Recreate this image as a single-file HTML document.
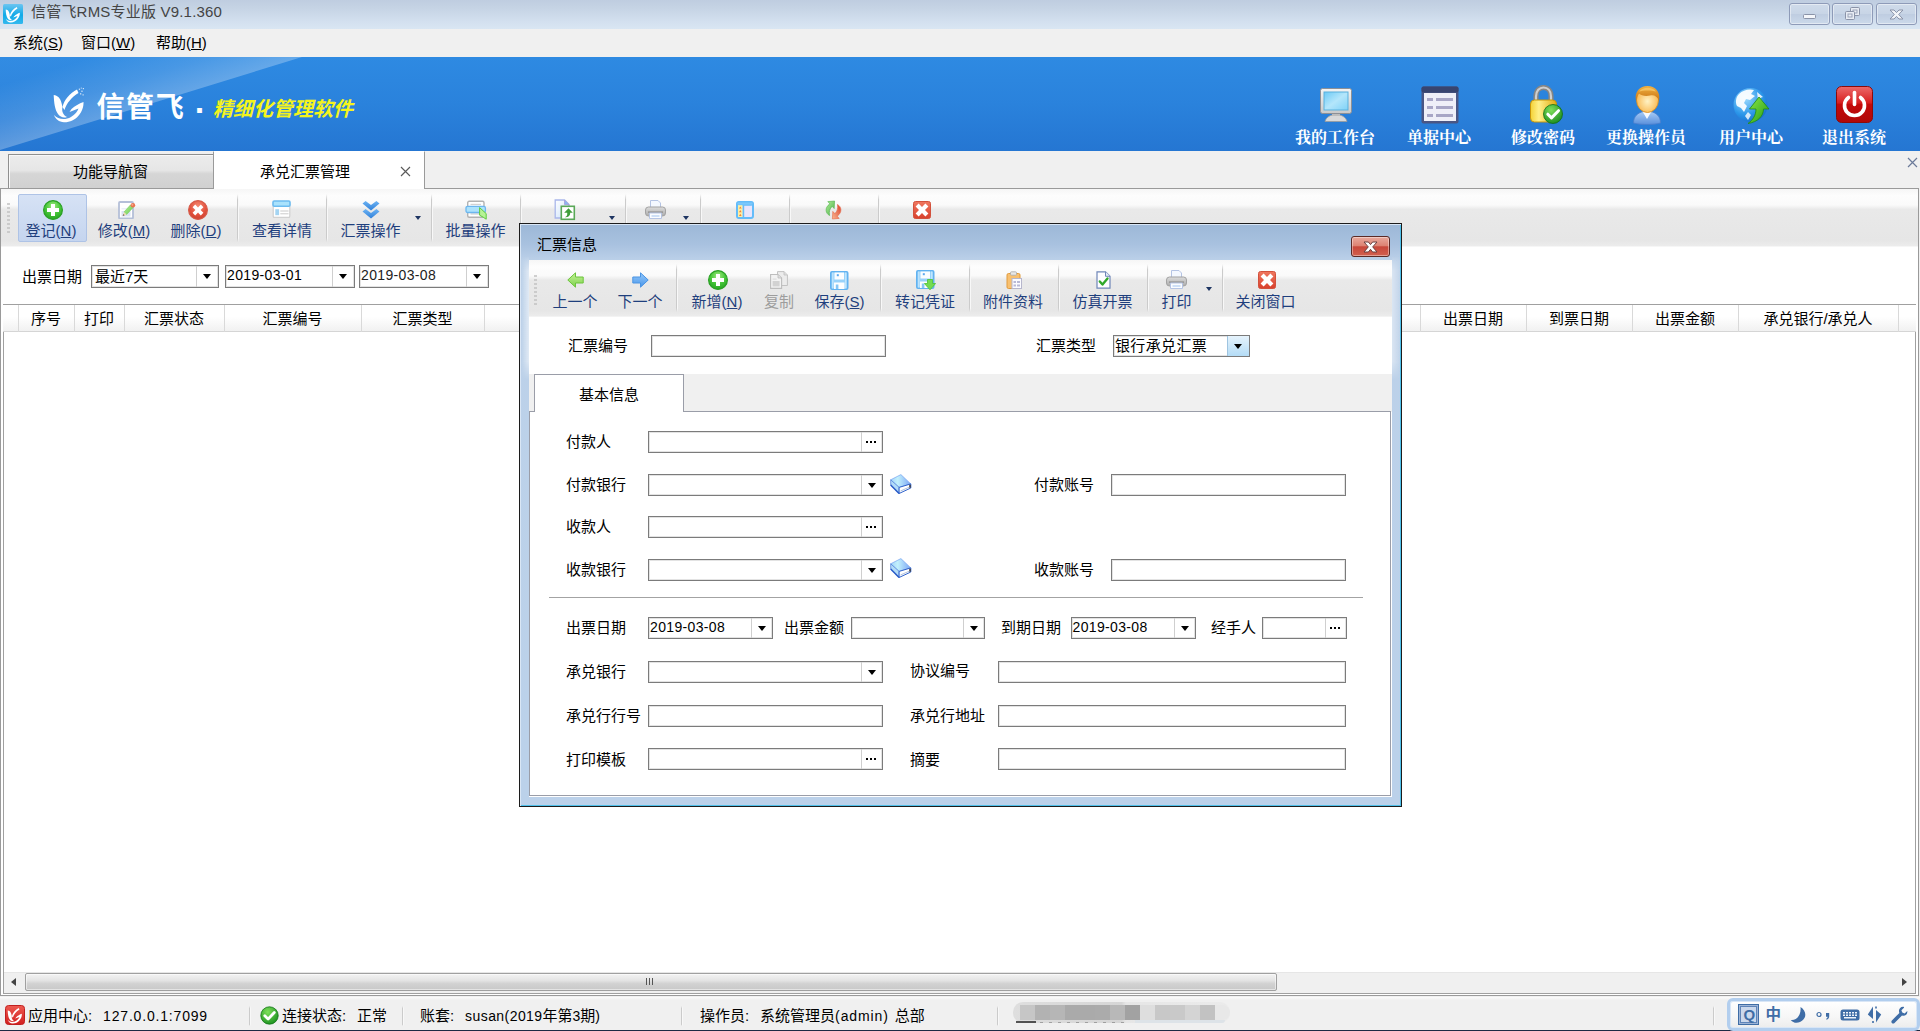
<!DOCTYPE html>
<html lang="zh-CN">
<head>
<meta charset="utf-8">
<title>信管飞RMS专业版 V9.1.360</title>
<style>
*{box-sizing:border-box;margin:0;padding:0}
html,body{width:1920px;height:1031px;overflow:hidden;background:#f0f0f0}
body{position:relative;font-family:"Liberation Sans","Noto Sans CJK SC",sans-serif;font-size:15px;color:#000}
.a{position:absolute}
.t{position:absolute;white-space:nowrap;line-height:20px;height:20px}
.c{text-align:center}
/* title bar */
#titlebar{left:0;top:0;width:1920px;height:29px;background:linear-gradient(#bfcde0 0,#c6d4e5 30%,#d3e0ef 75%,#d9e6f3 100%)}
.wb{position:absolute;top:3px;height:22px;border:1px solid #8e9bb8;border-radius:3px;background:linear-gradient(#cfdbea 0,#c8d5e6 48%,#bfcde1 52%,#cbd9ea 100%);box-shadow:inset 0 0 0 1px rgba(255,255,255,.45)}
/* menu */
#menubar{left:0;top:29px;width:1920px;height:28px;background:#f0f0f0}
/* banner */
#banner{left:0;top:57px;width:1920px;height:94px;background:linear-gradient(#2e8ae2 0,#2a82dc 50%,#2576d2 100%);overflow:hidden}
.bl{top:70px;height:22px;line-height:22px;font-size:16px;font-weight:700;color:#fff;font-family:"Liberation Serif","Noto Serif CJK SC",serif}
/* tabs */
.tab{position:absolute;font-size:15px;text-align:center}
/* toolbar */
.tb{background:linear-gradient(#f6f6f6 0,#fdfdfd 12%,#fafafa 28%,#e9e9e9 36%,#e6e6e6 90%,#ececec 100%)}
.tl{position:absolute;white-space:nowrap;line-height:20px;height:20px;color:#1f3f7d;font-size:15px;text-align:center;width:100px;margin-left:-50px}
.sep{position:absolute;width:2px;background:linear-gradient(90deg,#cbcbcb 0,#cbcbcb 50%,#f8f8f8 50%,#f8f8f8 100%);-webkit-mask-image:linear-gradient(transparent 0,#000 12%,#000 92%,transparent 100%);mask-image:linear-gradient(transparent 0,#000 12%,#000 92%,transparent 100%)}
.ic{position:absolute}
/* inputs */
.in{position:absolute;background:#fff;border:1px solid #7b7b7b;box-shadow:inset 0 0 0 1px #e3e3e3}
.in .b{position:absolute;right:0;top:0;bottom:0;width:21px;border-left:1px solid #cfcfcf}
.in .b.dd:after{content:"";position:absolute;left:6px;top:8px;border:4px solid transparent;border-top:5px solid #000;border-bottom:0}
.in .b.el:after{content:"";position:absolute;left:4px;top:9px;width:2px;height:2px;background:#000;box-shadow:4px 0 0 #000,8px 0 0 #000}
.in .v{position:absolute;left:1px;top:0;line-height:19px;font-size:14px;letter-spacing:.35px;white-space:nowrap}
.lb{position:absolute;white-space:nowrap;line-height:20px;height:20px;font-size:15px}
.hd{position:absolute;top:305px;height:27px;line-height:27px;text-align:center;font-size:15px;border-right:1px solid #d9d9d9}
</style>
</head>
<body>
<!-- TITLE BAR -->
<div id="titlebar" class="a">
<svg class="a" style="left:3px;top:4px" width="20" height="20" viewBox="0 0 20 20"><defs><linearGradient id="tig" x1="0" y1="0" x2="0" y2="1"><stop offset="0" stop-color="#6cc5f1"/><stop offset=".55" stop-color="#10aae8"/><stop offset="1" stop-color="#34b9ee"/></linearGradient></defs><rect x="0" y="0" width="20" height="20" rx="1.5" fill="url(#tig)"/><g fill="#fff" transform="translate(-22.800,-39.600) scale(.475)"><path d="M53.700 95C57.500 95.500 60.500 98 61.500 103L62.500 107C61.500 111 63 115 67 117 64 118.500 60 117 58 114 55 110 54 103 53.700 95z"/><path d="M62.500 107C64 100 70 93 77 89.500L78.500 93C72 97 66.500 103 64.500 110z"/><path d="M83.500 102C84 112 76 122.500 64 122.300 59 122 55.500 119 54 115 58 119.500 65 120.500 71 117 75 114.500 77.500 111.500 78.500 108.500L69.500 112 71.500 109C75 106 79 103.500 83.500 102z"/></g></svg>
<div class="t" style="left:31px;top:2px;font-size:15px;color:#444;letter-spacing:.2px">信管飞RMS专业版 V9.1.360</div>
<div class="wb" style="left:1789px;width:41px"><div class="a" style="left:13px;top:10px;width:13px;height:5px;border:1px solid #8a93a8;border-radius:1.5px;background:#f4f6fa"></div></div>
<div class="wb" style="left:1832px;width:41px"><div class="a" style="left:17px;top:3px;width:10px;height:9px;border:1px solid #8a93a8;border-radius:1.5px;background:#e9edf4;box-shadow:inset 0 0 0 1.5px #e9edf4,inset 0 0 0 2.5px #9aa3b8"></div><div class="a" style="left:12px;top:7px;width:10px;height:9px;border:1px solid #8a93a8;border-radius:1.5px;background:#e9edf4;box-shadow:inset 0 0 0 1.5px #e9edf4,inset 0 0 0 2.5px #9aa3b8"></div></div>
<div class="wb" style="left:1876px;width:41px"><svg class="a" style="left:12px;top:5px" width="15" height="11" viewBox="0 0 15 11"><path d="M1 1h4l2.500 2.600 2.500 -2.600h4l-4.300 4.500 4.300 4.500h-4l-2.500 -2.600 -2.500 2.600h-4l4.300 -4.500z" fill="#f2f4f8" stroke="#8a93a8" stroke-width="1" stroke-linejoin="round"/></svg></div>
</div>
<!-- MENU -->
<div id="menubar" class="a">
<div class="t" style="left:13px;top:4px">系统(<u>S</u>)</div>
<div class="t" style="left:81px;top:4px">窗口(<u>W</u>)</div>
<div class="t" style="left:156px;top:4px">帮助(<u>H</u>)</div>
</div>
<!-- BANNER -->
<div id="banner" class="a">
<svg class="a" style="left:0;top:0" width="420" height="94" viewBox="0 0 420 94"><defs><linearGradient id="bg1" gradientUnits="userSpaceOnUse" x1="151" y1="46.500" x2="133" y2="-12"><stop offset="0" stop-color="#fff" stop-opacity=".27"/><stop offset=".45" stop-color="#fff" stop-opacity=".13"/><stop offset="1" stop-color="#fff" stop-opacity=".02"/></linearGradient></defs><polygon points="0,0 302,0 0,93" fill="url(#bg1)"/></svg>
<svg class="a" style="left:50px;top:29px" width="38" height="38" viewBox="50 86 38 38"><g fill="#fff"><path d="M53.700 95C57.500 95.500 60.500 98 61.500 103L62.500 107C61.500 111 63 115 67 117 64 118.500 60 117 58 114 55 110 54 103 53.700 95z"/><path d="M62.500 107C64 100 70 93 77 89.500L78.500 93C72 97 66.500 103 64.500 110z"/><path d="M83.500 102C84 112 76 122.500 64 122.300 59 122 55.500 119 54 115 58 119.500 65 120.500 71 117 75 114.500 77.500 111.500 78.500 108.500L69.500 112 71.500 109C75 106 79 103.500 83.500 102z"/><g opacity=".75"><rect x="78.800" y="88.600" width="1.300" height="1.300"/><rect x="81.300" y="90.600" width="1.300" height="1.300"/><rect x="80" y="93.200" width="1.300" height="1.300"/><rect x="82.800" y="88" width="1.200" height="1.200"/><rect x="82.500" y="94.300" width="1.200" height="1.200"/><rect x="80.800" y="87.600" width="1" height="1"/></g></g></svg>
<div class="t" style="left:96.500px;top:30.500px;height:40px;line-height:40px;font-size:28px;color:#fff;font-weight:700;letter-spacing:1.600px">信管飞</div>
<div class="t" id="middot" style="left:193px;top:33px;width:15px;height:40px;line-height:40px;font-size:34px;font-weight:700;color:#fff;text-align:center">·</div>
<div class="t" style="left:213px;top:37px;height:30px;line-height:30px;font-size:20px;color:#f4f41c;font-weight:700;font-style:italic">精细化管理软件</div>

<!-- monitor -->
<svg class="a" style="left:1319px;top:30px" width="34" height="37" viewBox="0 0 34 37"><defs><linearGradient id="mo1" x1="0" y1="0" x2="0" y2="1"><stop offset="0" stop-color="#f4f4f4"/><stop offset="1" stop-color="#c9c9c9"/></linearGradient><linearGradient id="mo2" x1="0" y1="0" x2="1" y2="1"><stop offset="0" stop-color="#6ccaf6"/><stop offset=".5" stop-color="#b4e6fb"/><stop offset="1" stop-color="#7ed2f8"/></linearGradient></defs><path d="M6 34.500C7 30 12 27.500 17 27.500S27 30 28 34.500z" fill="#d9d9d9" stroke="#9a9a9a" stroke-width=".8"/><rect x="13" y="25" width="8" height="4" fill="#bdbdbd"/><rect x="1.500" y="1.500" width="31" height="25" rx="2" fill="url(#mo1)" stroke="#8d9096" stroke-width="1"/><rect x="5" y="5" width="24" height="18" fill="url(#mo2)" stroke="#5ab0dc" stroke-width="1"/></svg>
<div class="t bl" style="left:1295px">我的工作台</div>
<!-- doc -->
<svg class="a" style="left:1421px;top:29px" width="38" height="38" viewBox="0 0 38 38"><rect x="0.500" y="0.500" width="37" height="37" rx="2" fill="#4a5684"/><rect x="0.500" y="0.500" width="37" height="6" rx="2" fill="#38446f"/><rect x="3" y="7" width="32" height="28" fill="#efeff8"/><g fill="#a8a6c6"><rect x="6" y="12" width="6" height="3"/><rect x="15" y="12" width="17" height="3"/><rect x="6" y="20" width="6" height="3"/><rect x="15" y="20" width="17" height="3"/><rect x="6" y="28" width="6" height="3"/><rect x="15" y="28" width="17" height="3"/></g></svg>
<div class="t bl" style="left:1407px">单据中心</div>
<!-- lock -->
<svg class="a" style="left:1529px;top:28px" width="36" height="40" viewBox="0 0 36 40"><defs><linearGradient id="lk1" x1="0" y1="0" x2="1" y2="0"><stop offset="0" stop-color="#f4d236"/><stop offset=".32" stop-color="#fff08a"/><stop offset="1" stop-color="#e0aa10"/></linearGradient><radialGradient id="lk2" cx=".4" cy=".3" r=".8"><stop offset="0" stop-color="#7fe05a"/><stop offset="1" stop-color="#12841a"/></radialGradient></defs><path d="M7 17V11.500C7 5.500 10.500 2.500 14.500 2.500S22 5.500 22 11.500V17" fill="none" stroke="#858585" stroke-width="5.200"/><path d="M7 17V11.500C7 5.500 10.500 2.500 14.500 2.500S22 5.500 22 11.500V17" fill="none" stroke="#cfcfcf" stroke-width="2.200"/><rect x="1.500" y="15" width="26" height="22" rx="4" fill="url(#lk1)" stroke="#c8960c" stroke-width="1"/><circle cx="24" cy="29" r="9.500" fill="url(#lk2)" stroke="#0f6d14" stroke-width=".8"/><path d="M18.800 29.200l3.700 3.700 7 -7.200" fill="none" stroke="#fff" stroke-width="3" stroke-linecap="round" stroke-linejoin="round"/></svg>
<div class="t bl" style="left:1511px">修改密码</div>
<!-- user -->
<svg class="a" style="left:1631px;top:28px" width="32" height="40" viewBox="0 0 32 40"><defs><radialGradient id="us1" cx=".5" cy=".55" r=".6"><stop offset="0" stop-color="#fff2c4"/><stop offset="1" stop-color="#f8b040"/></radialGradient><linearGradient id="us2" x1="0" y1="0" x2="0" y2="1"><stop offset="0" stop-color="#a8ccf6"/><stop offset="1" stop-color="#5a90dc"/></linearGradient><linearGradient id="us3" x1="0" y1="0" x2="0" y2="1"><stop offset="0" stop-color="#f0b040"/><stop offset="1" stop-color="#c87414"/></linearGradient></defs><path d="M2.500 38C2.500 31 7 28 12 26.500H20C25 28 29.500 31 29.500 38 23 40 9 40 2.500 38z" fill="url(#us2)" stroke="#4a7ecc" stroke-width=".8"/><path d="M11.500 26.500L16 34 20.500 26.500z" fill="#f6faff"/><ellipse cx="16.500" cy="15" rx="11" ry="12.500" fill="url(#us1)" stroke="#d88a18" stroke-width=".8"/><path d="M5 15.500C3 7 9 1 16.500 1S30 7 28 15.500C26.500 11.500 23 9.500 19 10.500 14.500 11.600 10 10.500 8 8.500 6.500 10.500 5.500 13 5 15.500z" fill="url(#us3)"/><path d="M8 6.500C10.500 3.500 14 2.500 17.500 2.800 21 3.100 23.500 4.500 25 6.500 21 5 12 5 8 6.500z" fill="#f8c868" opacity=".8"/></svg>
<div class="t bl" style="left:1606px">更换操作员</div>
<!-- globe -->
<svg class="a" style="left:1732px;top:29px" width="38" height="38" viewBox="0 0 38 38"><defs><radialGradient id="gl1" cx=".35" cy=".3" r=".8"><stop offset="0" stop-color="#9fdcff"/><stop offset=".6" stop-color="#2c97ea"/><stop offset="1" stop-color="#1668c8"/></radialGradient><linearGradient id="gl2" x1="0" y1="0" x2="1" y2="1"><stop offset="0" stop-color="#8fe84a"/><stop offset="1" stop-color="#1f9a12"/></linearGradient></defs><circle cx="18.500" cy="19" r="17" fill="url(#gl1)"/><path d="M7 8C11 4 17 2.500 22 4L19 8 23 10 18 14 14 13 12 17 15 20 12 26 9 22 5 20C3 16 4 11 7 8z" fill="#fff" opacity=".92"/><path d="M25 6L31 11 28 12 30 15 26 14z" fill="#fff" opacity=".85"/><path d="M13 30L16 26 19 29 16 34z" fill="#fff" opacity=".8"/><path d="M27 11L37 23H31.500C31.500 30 26 36 16 37.500 21 34 24 29 24 23H17.500z" fill="url(#gl2)" stroke="#1f8a14" stroke-width=".8" stroke-linejoin="round"/></svg>
<div class="t bl" style="left:1719px">用户中心</div>
<!-- power -->
<svg class="a" style="left:1836px;top:29px" width="37" height="37" viewBox="0 0 37 37"><defs><linearGradient id="pw1" x1="0" y1="0" x2="0" y2="1"><stop offset="0" stop-color="#ec6a6a"/><stop offset=".45" stop-color="#d81f1f"/><stop offset=".5" stop-color="#c40a0a"/><stop offset="1" stop-color="#b00808"/></linearGradient></defs><rect x="0.500" y="0.500" width="36" height="36" rx="5" fill="url(#pw1)" stroke="#8c0a0a" stroke-width="1"/><path d="M12.500 11.500A10 10 0 1 0 24.500 11.500" fill="none" stroke="#fff" stroke-width="3.600" stroke-linecap="round"/><path d="M18.500 6.500V18.500" stroke="#fff" stroke-width="3.600" stroke-linecap="round"/></svg>
<div class="t bl" style="left:1822px">退出系统</div>

</div>
<!-- TABS -->
<div id="tabs">
<div class="a" style="left:8px;top:154px;width:206px;height:35px;border:1px solid #8f8f8f;border-bottom:0;background:linear-gradient(#ececec 0,#e6e6e6 45%,#d6d6d6 55%,#d0d0d0 100%);box-shadow:inset 1px 1px 0 #f8f8f8"></div>
<div class="t c" style="left:8px;top:161.500px;width:205px">功能导航窗</div>
<div class="a" style="left:213px;top:151px;width:212px;height:38px;border:1px solid #9a9a9a;border-bottom:0;border-top:1px solid #fff;background:#fff"></div>
<div class="t c" style="left:225px;top:161.500px;width:160px">承兑汇票管理</div>
<svg class="a" style="left:400px;top:166px" width="11" height="11" viewBox="0 0 11 11"><path d="M1 1l9 9M10 1l-9 9" stroke="#5a5a5a" stroke-width="1.150" fill="none"/></svg>
<svg class="a" style="left:1907px;top:157px" width="11" height="11" viewBox="0 0 11 11"><path d="M1 1l9 9M10 1l-9 9" stroke="#6b7a99" stroke-width="1.200" fill="none"/></svg>
</div>
<!-- MAIN PANEL -->
<div id="main">
<div class="a" style="left:0;top:188px;width:1919px;height:808px;border:1px solid #9a9a9a;background:#fff"></div>
<div class="a" style="left:3px;top:304px;width:1913px;height:690px;border:1px solid #a0a0a0"></div>
<div class="a" style="left:214px;top:188px;width:210px;height:1px;background:#fff"></div>
<!-- toolbar -->
<div class="a tb" style="left:1px;top:189px;width:1917px;height:57px"></div>
<div class="a" style="left:1px;top:246px;width:1917px;height:1px;background:#f6f6f6"></div>
<div class="a" style="left:7px;top:203px;width:3px;height:30px;background:repeating-linear-gradient(#c4c4c4 0,#c4c4c4 2px,transparent 2px,transparent 4px);opacity:.8"></div>
<div class="a" style="left:18px;top:194px;width:69px;height:48px;border:1px solid #aec3e6;border-radius:2px;background:linear-gradient(#d6e2f5,#c5d5ef)"></div>
<svg class="a" style="left:42.5px;top:200px" width="20" height="20" viewBox="0 0 20 20"><defs><radialGradient id="g1" cx=".5" cy=".3" r=".75"><stop offset="0" stop-color="#a4ea84"/><stop offset=".5" stop-color="#48c83a"/><stop offset="1" stop-color="#22a01e"/></radialGradient></defs><circle cx="10" cy="10" r="9.400" fill="url(#g1)" stroke="#2aa024" stroke-width="1.200"/><path d="M8 4h4v4h4v4h-4v4h-4v-4h-4v-4h4z" fill="#fff"/></svg>
<div class="tl" style="left:51px;top:221px;">登记(<u>N</u>)</div>
<svg class="a" style="left:117.5px;top:200.75px" width="18" height="18.5" viewBox="0 0 18 18.5"><defs><linearGradient id="g2" x1="0" y1="0" x2="1" y2="1"><stop offset="0" stop-color="#b4f096"/><stop offset="1" stop-color="#6ccc54"/></linearGradient></defs><rect x="1" y="1" width="14" height="16.500" rx="1" fill="#fff" stroke="#b4bfd8" stroke-width="1.800"/><rect x="3.500" y="7.300" width="9" height="1" fill="#e3e8f5"/><rect x="3.500" y="10" width="9" height="5.500" fill="#d9e2f5"/><path d="M6 11L12.600 3.800 15.200 6.400 8.600 13.600z" fill="url(#g2)" stroke="#78cc5c" stroke-width=".6"/><path d="M6 11L8.600 13.600 4.700 14.900z" fill="#f0dcb4"/><path d="M4.700 14.900L5.400 12.900 6.700 14.200z" fill="#6a5a4a"/><circle cx="14.900" cy="4.300" r="2.300" fill="#ea7450"/><circle cx="14.400" cy="3.800" r="1" fill="#f8a888"/></svg>
<div class="tl" style="left:124px;top:221px;">修改(<u>M</u>)</div>
<svg class="a" style="left:187.5px;top:200px" width="20" height="20" viewBox="0 0 20 20"><defs><radialGradient id="g3" cx=".5" cy=".3" r=".75"><stop offset="0" stop-color="#f58a72"/><stop offset=".6" stop-color="#e2503c"/><stop offset="1" stop-color="#c8402e"/></radialGradient></defs><circle cx="10" cy="10" r="9.400" fill="url(#g3)" stroke="#d65a48" stroke-width="1.200"/><path d="M4.600 7.200L7.200 4.600 10 7.400 12.800 4.600 15.400 7.200 12.600 10 15.400 12.800 12.800 15.400 10 12.600 7.200 15.400 4.600 12.800 7.400 10z" fill="#fff"/></svg>
<div class="tl" style="left:196px;top:221px;">删除(<u>D</u>)</div>
<div class="sep" style="left:237px;top:194px;height:48px"></div>
<svg class="a" style="left:272px;top:199.75px" width="19" height="18.5" viewBox="0 0 19 18.5"><rect x="1.200" y="3" width="16.600" height="14.300" rx="1" fill="#fff" stroke="#cfcfcf" stroke-width="1.200"/><rect x="1" y="17" width="17" height="1" fill="#d2d2d2" opacity=".7"/><rect x="1" y="1" width="17" height="5.200" rx="1.200" fill="#a9e2fc" stroke="#6cbcf0" stroke-width="1.600"/><rect x="3.300" y="9.200" width="3.800" height="6" fill="#a4d4f2"/><rect x="8.300" y="10.400" width="8.200" height="1.200" fill="#d2d2d2"/><rect x="8.300" y="13" width="8.200" height="1.400" fill="#dadada"/></svg>
<div class="tl" style="left:282px;top:221px;">查看详情</div>
<div class="sep" style="left:326px;top:194px;height:48px"></div>
<svg class="a" style="left:362px;top:201px" width="18" height="18" viewBox="0 0 18 18"><defs><linearGradient id="g4" x1="0" y1="0" x2="0" y2="1"><stop offset="0" stop-color="#6db4f4"/><stop offset="1" stop-color="#2f7fd8"/></linearGradient></defs><path d="M0.500 2.600L3.600 0 9 4 14.400 0 17.500 2.600 9 9.600z" fill="url(#g4)"/><path d="M0.500 10.600L3.600 8 9 12 14.400 8 17.500 10.600 9 17.600z" fill="url(#g4)"/></svg>
<div class="tl" style="left:370.5px;top:221px;">汇票操作</div>
<div class="a" style="left:414.5px;top:216px;border:3.500px solid transparent;border-top:4px solid #1e3562;border-bottom:0"></div>
<div class="sep" style="left:431px;top:194px;height:48px"></div>
<svg class="a" style="left:465px;top:199.5px" width="22" height="20" viewBox="0 0 22 20"><rect x="2.700" y="1.200" width="16.300" height="16" rx="1.500" fill="#fff" stroke="#b2b2b2" stroke-width="1.400"/><rect x="5.500" y="3.800" width="10.500" height="1.200" fill="#d2d2d2"/><rect x="5.500" y="13" width="10.500" height="1.800" fill="#dedede"/><rect x="1" y="6.300" width="19.400" height="6.200" rx="1.600" fill="#ace2fc" stroke="#6cb6ee" stroke-width="1.300"/><path d="M14.600 7.600L21.200 13.600V19.200L18.200 17.200 14.600 15.200z" fill="#b6f296" stroke="#5ecb3e" stroke-width="1" stroke-linejoin="round"/></svg>
<div class="tl" style="left:475.5px;top:221px;">批量操作</div>
<div class="sep" style="left:520px;top:194px;height:48px"></div>
<svg class="a" style="left:554.45px;top:199.45px" width="21.5" height="21.5" viewBox="0 0 21.5 21.5"><defs><linearGradient id="g5" x1="0" y1="0" x2="1" y2="1"><stop offset="0" stop-color="#ffffff"/><stop offset="1" stop-color="#c8e0fa"/></linearGradient></defs><path d="M1.200 1H10.500L15 5.500V19H1.200z" fill="url(#g5)" stroke="#a9b7ea" stroke-width="1.300"/><path d="M10.500 1V5.500H15z" fill="#86baf2" stroke="#a8a0dc" stroke-width=".9"/><rect x="7.300" y="7.300" width="13" height="13" fill="#fff" stroke="#5aa858" stroke-width="1.600"/><path d="M14.500 9.200L18.800 13.800H16.200C16.400 16.500 14.500 18.500 10.800 18.300 13 17.500 13.500 15.800 13.200 13.800H10.200z" fill="#3f9e3a"/></svg>
<div class="a" style="left:608.5px;top:216px;border:3.500px solid transparent;border-top:4px solid #1e3562;border-bottom:0"></div>
<div class="sep" style="left:625px;top:194px;height:48px"></div>
<svg class="a" style="left:644.5px;top:200px" width="21" height="20" viewBox="0 0 21 20"><defs><linearGradient id="g6" x1="0" y1="0" x2="0" y2="1"><stop offset="0" stop-color="#dedede"/><stop offset=".5" stop-color="#c2c2c2"/><stop offset="1" stop-color="#adadad"/></linearGradient></defs><path d="M5.500 .5H13L15.500 3V9H5.500z" fill="#f4f8ff" stroke="#b5c4e4" stroke-width="1"/><rect x="0.500" y="7" width="20" height="9" rx="3" fill="url(#g6)" stroke="#a2a2a2" stroke-width="1"/><rect x="3" y="11.500" width="15" height="1.200" fill="#8a8a8a"/><path d="M4.500 13H16.500V18.500H4.500z" fill="#fafcff" stroke="#b5c4e4" stroke-width="1"/><rect x="6.500" y="15.500" width="8" height="1" fill="#9fc2ee"/></svg>
<div class="a" style="left:683px;top:216px;border:3.500px solid transparent;border-top:4px solid #1e3562;border-bottom:0"></div>
<div class="sep" style="left:700px;top:194px;height:48px"></div>
<svg class="a" style="left:736px;top:201px" width="18" height="18" viewBox="0 0 18 18"><rect x="1" y="1" width="16" height="16" rx="2" fill="#e9e5fc" stroke="#64bcf9" stroke-width="2"/><rect x="1" y="1" width="16" height="3.200" rx="1.500" fill="#7cc8fb" stroke="#64bcf9" stroke-width="1"/><rect x="2" y="4.200" width="4.600" height="11.800" fill="#fdf0a2"/><rect x="6.600" y="4.200" width="1.600" height="11.800" fill="#64bcf9"/><g fill="#f57c3c"><path d="M3 7.600L4.300 5.400 5.600 7.600z"/><path d="M3 11.300L4.300 9.100 5.600 11.300z"/><path d="M3 15L4.300 12.800 5.600 15z"/></g></svg>
<div class="sep" style="left:789px;top:194px;height:48px"></div>
<svg class="a" style="left:824px;top:200px" width="19" height="20" viewBox="0 0 19 20"><defs><linearGradient id="g7" x1="0" y1="0" x2="1" y2="1"><stop offset="0" stop-color="#b2f09a"/><stop offset="1" stop-color="#48ae46"/></linearGradient><linearGradient id="g8" x1="1" y1="0" x2="0" y2="1"><stop offset="0" stop-color="#d8402c"/><stop offset="1" stop-color="#fbb690"/></linearGradient></defs><path d="M3.800 1.600L10.600 1 10.200 8.600 8.200 6.400C5.800 8.400 4.800 11.600 5.600 15.600 1.600 13.400 .2 8 5.800 3.800z" fill="url(#g7)" stroke="#52b24c" stroke-width=".6" stroke-linejoin="round"/><path d="M15.200 18.400L8.400 19 8.800 11.400 10.800 13.600C13.200 11.600 14.200 8.400 13.400 4.400 17.400 6.600 18.800 12 13.200 16.200z" fill="url(#g8)" stroke="#e66a48" stroke-width=".6" stroke-linejoin="round"/></svg>
<div class="sep" style="left:878px;top:194px;height:48px"></div>
<svg class="a" style="left:913px;top:201px" width="18" height="18" viewBox="0 0 18 18"><defs><linearGradient id="g9" x1="0" y1="0" x2="0" y2="1"><stop offset="0" stop-color="#f07860"/><stop offset="1" stop-color="#d8402c"/></linearGradient></defs><rect x="0.500" y="0.500" width="17" height="17" rx="2" fill="url(#g9)" stroke="#d2513c" stroke-width="1"/><path d="M2.600 5.600L5.600 2.600 9 6 12.400 2.600 15.400 5.600 12 9 15.400 12.400 12.400 15.400 9 12 5.600 15.400 2.600 12.400 6 9z" fill="#fff"/></svg>
<!-- filter row -->
<div class="lb" style="left:22px;top:267px">出票日期</div>
<div class="in" style="left:91px;top:265px;width:128px;height:23px"><div class="v" style="font-size:15px;top:1px;left:3px;letter-spacing:0">最近7天</div><div class="b dd" style="width:22px"></div></div>
<div class="in" style="left:225px;top:265px;width:130px;height:23px"><div class="v">2019-03-01</div><div class="b dd" style="width:22px"></div></div>
<div class="in" style="left:359px;top:265px;width:130px;height:23px"><div class="v" style="color:#222">2019-03-08</div><div class="b dd" style="width:22px"></div></div>
<!-- grid header -->
<div class="a" style="left:3px;top:304px;width:1913px;height:28px;border-top:1px solid #a0a0a0;border-bottom:1px solid #d5d5d5;background:linear-gradient(#fff 0,#fff 45%,#f1f1f1 100%)"></div>
<div class="hd" style="left:3px;width:16px"></div>
<div class="hd" style="left:19px;width:56px;padding-right:1px">序号</div>
<div class="hd" style="left:75px;width:50px;padding-right:1px">打印</div>
<div class="hd" style="left:125px;width:100px;padding-right:1px">汇票状态</div>
<div class="hd" style="left:225px;width:137px;padding-right:1px">汇票编号</div>
<div class="hd" style="left:362px;width:123px;padding-right:1px">汇票类型</div>
<div class="hd" style="left:1300px;width:121px"></div>
<div class="hd" style="left:1421px;width:106px;padding-right:1px">出票日期</div>
<div class="hd" style="left:1527px;width:106px;padding-right:1px">到票日期</div>
<div class="hd" style="left:1633px;width:106px;padding-right:1px">出票金额</div>
<div class="hd" style="left:1739px;width:160px;padding-right:1px">承兑银行/承兑人</div>

<!-- scrollbar -->
<div class="a" style="left:4px;top:972px;width:1911px;height:21px;background:#f0f0f0;border-top:1px solid #e6e6e6"></div>
<div class="a" style="left:25px;top:973px;width:1252px;height:18px;border:1px solid #a0a0a0;border-radius:2px;background:linear-gradient(#f3f3f3 0,#e4e4e4 40%,#d2d2d2 60%,#c8c8c8 100%);box-shadow:inset 0 0 0 1px rgba(255,255,255,.5)"></div>
<div class="a" style="left:645.500px;top:977.500px;width:8px;height:7px;background:repeating-linear-gradient(90deg,#555 0,#555 1px,transparent 1px,transparent 3px)"></div>
<div class="a" style="left:11px;top:977.500px;border:4px solid transparent;border-right:5px solid #444;border-left:0"></div>
<div class="a" style="left:1902px;top:977.500px;border:4px solid transparent;border-left:5px solid #444;border-right:0"></div>

</div>
<div id="dlg">
<div class="a" style="left:519px;top:223px;width:883px;height:584px;border:1px solid #1c1c1c;background:linear-gradient(#9cb7d7 0,#a8c1df 20px,#bcd1e9 37px,#bbd1ea 100%);box-shadow:inset 1px 1px 0 #d9e6f5,inset -1px -1px 0 #4fc0ea"></div>
<div class="a" style="left:521px;top:256px;width:8px;height:124px;background:linear-gradient(90deg,rgba(255,255,255,0),rgba(255,255,255,.55));-webkit-mask-image:linear-gradient(transparent,#000 12%,#000 85%,transparent);mask-image:linear-gradient(transparent,#000 12%,#000 85%,transparent)"></div>
<div class="a" style="left:1392px;top:256px;width:8px;height:124px;background:linear-gradient(90deg,rgba(255,255,255,.45),rgba(255,255,255,.1));-webkit-mask-image:linear-gradient(transparent,#000 12%,#000 85%,transparent);mask-image:linear-gradient(transparent,#000 12%,#000 85%,transparent)"></div>
<div class="t" style="left:537px;top:235px;font-size:15px;color:#000">汇票信息</div>
<div class="a" style="left:1351px;top:236px;width:39px;height:21px;border:1px solid #5b2a26;border-radius:3px;background:linear-gradient(#e9a99d 0,#dd8373 45%,#c8473a 52%,#d2604f 100%);box-shadow:inset 0 0 0 1px rgba(255,255,255,.4)"></div>
<svg class="a" style="left:1363px;top:241px" width="15" height="12" viewBox="0 0 15 12"><path d="M1 1h4.400l2.100 2.600 2.100 -2.600h4.400l-4.300 4.900 4.300 5.100h-4.400l-2.100 -2.700 -2.100 2.700h-4.400l4.300 -5.100z" fill="#fff" stroke="#6a4040" stroke-width="1" stroke-linejoin="round"/></svg>
<div class="a" style="left:529px;top:260px;width:863px;height:537px;background:#fff"></div>
<div class="a tb" style="left:529px;top:260px;width:863px;height:56px"></div>
<div class="a" style="left:529px;top:316px;width:863px;height:1px;background:#f3f3f3"></div>
<div class="a" style="left:534px;top:275px;width:3px;height:30px;background:repeating-linear-gradient(#c4c4c4 0,#c4c4c4 2px,transparent 2px,transparent 4px);opacity:.8"></div>
<svg class="a" style="left:566.5px;top:272px" width="17" height="16" viewBox="0 0 17 16"><defs><linearGradient id="g10" x1="0" y1="0" x2="0" y2="1"><stop offset="0" stop-color="#c4f298"/><stop offset="1" stop-color="#7ed24c"/></linearGradient></defs><path d="M0.800 8L8.500 .8V5H16.200V11H8.500V15.200z" fill="url(#g10)" stroke="#6cc43c" stroke-width="1" stroke-linejoin="round"/></svg>
<div class="tl" style="left:575px;top:292px;">上一个</div>
<svg class="a" style="left:631.5px;top:272px" width="17" height="16" viewBox="0 0 17 16"><defs><linearGradient id="g11" x1="0" y1="0" x2="0" y2="1"><stop offset="0" stop-color="#94c8fa"/><stop offset="1" stop-color="#4a96ea"/></linearGradient></defs><path d="M16.200 8L8.500 .8V5H0.800V11H8.500V15.200z" fill="url(#g11)" stroke="#4a94e4" stroke-width="1" stroke-linejoin="round"/></svg>
<div class="tl" style="left:640px;top:292px;">下一个</div>
<div class="sep" style="left:676px;top:264px;height:48px"></div>
<svg class="a" style="left:707.5px;top:270px" width="20" height="20" viewBox="0 0 20 20"><defs><radialGradient id="g12" cx=".5" cy=".3" r=".75"><stop offset="0" stop-color="#a4ea84"/><stop offset=".5" stop-color="#48c83a"/><stop offset="1" stop-color="#22a01e"/></radialGradient></defs><circle cx="10" cy="10" r="9.400" fill="url(#g12)" stroke="#2aa024" stroke-width="1.200"/><path d="M8 4h4v4h4v4h-4v4h-4v-4h-4v-4h4z" fill="#fff"/></svg>
<div class="tl" style="left:717px;top:292px;">新增(<u>N</u>)</div>
<svg class="a" style="left:770px;top:271px" width="18" height="18" viewBox="0 0 18 18"><path d="M7.500 .6H14L17.400 4V14.500H7.500z" fill="#ececec" stroke="#c2c2c2" stroke-width="1"/><path d="M14 .6V4H17.400" fill="#dcdcdc" stroke="#c2c2c2" stroke-width=".8"/><path d="M.6 3.500H8L11.600 7V17.400H.6z" fill="#f2f2f2" stroke="#bdbdbd" stroke-width="1.100"/><path d="M8 3.500V7H11.600" fill="#dedede" stroke="#bdbdbd" stroke-width=".8"/><rect x="2.600" y="10" width="7" height="5.400" fill="#d2d2d2"/><rect x="2.600" y="7.600" width="4" height="1" fill="#d8d8d8"/></svg>
<div class="tl" style="left:779px;top:292px;color:#9d9d9d;">复制</div>
<svg class="a" style="left:830.25px;top:270.5px" width="18.5" height="19" viewBox="0 0 18.5 19"><rect x="0.750" y="0.750" width="17" height="17.500" rx="1.200" fill="#98d2fa" stroke="#62b2f0" stroke-width="1.500"/><rect x="2.200" y="1.500" width="1.200" height="16" fill="#c6e8fd"/><rect x="15.100" y="1.500" width="1.200" height="16" fill="#c6e8fd"/><rect x="4.500" y="1.500" width="9.500" height="7" fill="#fbfdff"/><rect x="6.800" y="3.200" width="2" height="2" fill="#5aa8ee"/><rect x="4" y="11.500" width="10.500" height="6.500" fill="#fdfeff"/><rect x="5.800" y="13.500" width="2.600" height="4.500" fill="#86c6f6"/></svg>
<div class="tl" style="left:839.5px;top:292px;">保存(<u>S</u>)</div>
<div class="sep" style="left:880px;top:264px;height:48px"></div>
<svg class="a" style="left:915.55px;top:270.25px" width="20.5" height="20.5" viewBox="0 0 20.5 20.5"><rect x="0.750" y="0.750" width="17" height="17.500" rx="1.200" fill="#98d2fa" stroke="#62b2f0" stroke-width="1.500"/><rect x="2.200" y="1.500" width="1.200" height="16" fill="#c6e8fd"/><rect x="15.100" y="1.500" width="1.200" height="16" fill="#c6e8fd"/><rect x="4.500" y="1.500" width="9.500" height="7" fill="#fbfdff"/><rect x="6.800" y="3.200" width="2" height="2" fill="#5aa8ee"/><rect x="4" y="11.500" width="10.500" height="6.500" fill="#fdfeff"/><rect x="5.800" y="13.500" width="2.600" height="4.500" fill="#86c6f6"/><path d="M11.500 9.500H16.500V13.500H19.600L14 19.800 8.400 13.500H11.500z" fill="#74dc52" stroke="#4cc030" stroke-width=".8" stroke-linejoin="round"/></svg>
<div class="tl" style="left:925px;top:292px;">转记凭证</div>
<div class="sep" style="left:969px;top:264px;height:48px"></div>
<svg class="a" style="left:1006px;top:270.75px" width="17" height="18.5" viewBox="0 0 17 18.5"><rect x="1" y="2.500" width="13" height="15" rx="1.500" fill="#f8c070" stroke="#e09a3c" stroke-width="1"/><rect x="4.500" y=".8" width="6" height="3.400" rx="1" fill="#e8e8e8" stroke="#a9a9a9" stroke-width=".8"/><rect x="6" y="7.500" width="9.500" height="10" fill="#fbfbff" stroke="#b6b6cc" stroke-width="1"/><g fill="#b9b9d6"><rect x="7.500" y="10" width="2.500" height="2"/><rect x="11" y="10" width="3" height="2"/><rect x="7.500" y="13.500" width="2.500" height="2"/><rect x="11" y="13.500" width="3" height="2"/></g></svg>
<div class="tl" style="left:1013px;top:292px;">附件资料</div>
<div class="sep" style="left:1058px;top:264px;height:48px"></div>
<svg class="a" style="left:1095.5px;top:271px" width="15" height="18" viewBox="0 0 15 18"><path d="M1 .8H9.500L14 5.300V17.200H1z" fill="#fdfdff" stroke="#6f86b8" stroke-width="1.200"/><path d="M9.500 .8V5.300H14" fill="#e4eaf6" stroke="#6f86b8" stroke-width="1"/><path d="M3.800 10.500L6.500 13.500 11.500 7.500" fill="none" stroke="#2fa82a" stroke-width="2.400" stroke-linejoin="round" stroke-linecap="round"/></svg>
<div class="tl" style="left:1102.5px;top:292px;">仿真开票</div>
<div class="sep" style="left:1147px;top:264px;height:48px"></div>
<svg class="a" style="left:1166px;top:270px" width="21" height="20" viewBox="0 0 21 20"><defs><linearGradient id="g13" x1="0" y1="0" x2="0" y2="1"><stop offset="0" stop-color="#dedede"/><stop offset=".5" stop-color="#c2c2c2"/><stop offset="1" stop-color="#adadad"/></linearGradient></defs><path d="M5.500 .5H13L15.500 3V9H5.500z" fill="#f4f8ff" stroke="#b5c4e4" stroke-width="1"/><rect x="0.500" y="7" width="20" height="9" rx="3" fill="url(#g13)" stroke="#a2a2a2" stroke-width="1"/><rect x="3" y="11.500" width="15" height="1.200" fill="#8a8a8a"/><path d="M4.500 13H16.500V18.500H4.500z" fill="#fafcff" stroke="#b5c4e4" stroke-width="1"/><rect x="6.500" y="15.500" width="8" height="1" fill="#9fc2ee"/></svg>
<div class="tl" style="left:1176.5px;top:292px;">打印</div>
<div class="a" style="left:1205.5px;top:287px;border:3.500px solid transparent;border-top:4px solid #1e3562;border-bottom:0"></div>
<div class="sep" style="left:1222px;top:264px;height:48px"></div>
<svg class="a" style="left:1258px;top:271px" width="18" height="18" viewBox="0 0 18 18"><defs><linearGradient id="g14" x1="0" y1="0" x2="0" y2="1"><stop offset="0" stop-color="#f07860"/><stop offset="1" stop-color="#d8402c"/></linearGradient></defs><rect x="0.500" y="0.500" width="17" height="17" rx="2" fill="url(#g14)" stroke="#d2513c" stroke-width="1"/><path d="M2.600 5.600L5.600 2.600 9 6 12.400 2.600 15.400 5.600 12 9 15.400 12.400 12.400 15.400 9 12 5.600 15.400 2.600 12.400 6 9z" fill="#fff"/></svg>
<div class="tl" style="left:1265.5px;top:292px;">关闭窗口</div>
<div class="lb" style="left:568px;top:335.5px">汇票编号</div>
<div class="in" style="left:650.5px;top:334.5px;width:235px;height:22px"></div>
<div class="lb" style="left:1036px;top:335.5px">汇票类型</div>
<div class="in" style="left:1113px;top:334.5px;width:136.5px;height:22px"><div class="v"><span style="font-size:15px">银行承兑汇票</span></div><div class="b dd" style="width:22px;background:linear-gradient(#e6f3fc,#b4dcf6);border-left:1px solid #9fc4e0;"></div></div>
<div class="a" style="left:529px;top:374px;width:863px;height:38px;background:#f0f0f0"></div>
<div class="a" style="left:529px;top:411px;width:862px;height:385px;background:#fff;border:1px solid #9a9da8"></div>
<div class="a" style="left:534px;top:374px;width:150px;height:38px;background:#fff;border:1px solid #9a9da8;border-bottom:0"></div>
<div class="t c" style="left:534px;top:384.500px;width:150px">基本信息</div>
<div class="lb" style="left:566px;top:432px">付款人</div>
<div class="in" style="left:648px;top:431px;width:235px;height:22px"><div class="b el" style="width:21px;"></div></div>
<div class="lb" style="left:566px;top:474.5px">付款银行</div>
<div class="in" style="left:648px;top:473.5px;width:235px;height:22px"><div class="b dd" style="width:21px;"></div></div>
<svg class="a" style="left:889.5px;top:473.5px" width="22" height="21" viewBox="0 0 22 21"><defs><linearGradient id="g15" x1="0" y1="0" x2="1" y2="0"><stop offset="0" stop-color="#a4d4f8"/><stop offset=".35" stop-color="#c2f0fc"/><stop offset="1" stop-color="#7aa6f4"/></linearGradient></defs><path d="M10.900 .6L20.800 9.900 9.100 13.400 .7 5.800z" fill="url(#g15)" stroke="#78a4f0" stroke-width=".7" stroke-linejoin="round"/><path d="M.7 5.800V11L9.100 19.500V13.400z" fill="#b2dcf8" stroke="#4a7cd8" stroke-width=".7" stroke-linejoin="round"/><path d="M9.100 13.400L20.800 9.900V14L9.100 19.500z" fill="#fff" stroke="#2f62cc" stroke-width="1" stroke-linejoin="round"/><path d="M10.500 17L19.600 13" stroke="#9ab0d0" stroke-width=".8"/><path d="M.7 11L9.100 19.500" stroke="#2a5cc8" stroke-width="1.500"/><rect x="19.300" y="10.700" width="1.400" height="3" fill="#2a2a2a"/></svg>
<div class="lb" style="left:1034px;top:474.5px">付款账号</div>
<div class="in" style="left:1111px;top:473.5px;width:235px;height:22px"></div>
<div class="lb" style="left:566px;top:517px">收款人</div>
<div class="in" style="left:648px;top:516px;width:235px;height:22px"><div class="b el" style="width:21px;"></div></div>
<div class="lb" style="left:566px;top:559.5px">收款银行</div>
<div class="in" style="left:648px;top:558.5px;width:235px;height:22px"><div class="b dd" style="width:21px;"></div></div>
<svg class="a" style="left:889.5px;top:558px" width="22" height="21" viewBox="0 0 22 21"><defs><linearGradient id="g16" x1="0" y1="0" x2="1" y2="0"><stop offset="0" stop-color="#a4d4f8"/><stop offset=".35" stop-color="#c2f0fc"/><stop offset="1" stop-color="#7aa6f4"/></linearGradient></defs><path d="M10.900 .6L20.800 9.900 9.100 13.400 .7 5.800z" fill="url(#g16)" stroke="#78a4f0" stroke-width=".7" stroke-linejoin="round"/><path d="M.7 5.800V11L9.100 19.500V13.400z" fill="#b2dcf8" stroke="#4a7cd8" stroke-width=".7" stroke-linejoin="round"/><path d="M9.100 13.400L20.800 9.900V14L9.100 19.500z" fill="#fff" stroke="#2f62cc" stroke-width="1" stroke-linejoin="round"/><path d="M10.500 17L19.600 13" stroke="#9ab0d0" stroke-width=".8"/><path d="M.7 11L9.100 19.500" stroke="#2a5cc8" stroke-width="1.500"/><rect x="19.300" y="10.700" width="1.400" height="3" fill="#2a2a2a"/></svg>
<div class="lb" style="left:1034px;top:559.5px">收款账号</div>
<div class="in" style="left:1111px;top:558.5px;width:235px;height:22px"></div>
<div class="a" style="left:549px;top:597px;width:814px;height:1px;background:#a3a3a3"></div>
<div class="lb" style="left:566px;top:618px">出票日期</div>
<div class="in" style="left:648px;top:617px;width:125px;height:22px"><div class="v">2019-03-08</div><div class="b dd" style="width:21px;"></div></div>
<div class="lb" style="left:784px;top:618px">出票金额</div>
<div class="in" style="left:851px;top:617px;width:134px;height:22px"><div class="b dd" style="width:21px;"></div></div>
<div class="lb" style="left:1001px;top:618px">到期日期</div>
<div class="in" style="left:1070.5px;top:617px;width:125px;height:22px"><div class="v">2019-03-08</div><div class="b dd" style="width:21px;"></div></div>
<div class="lb" style="left:1211px;top:618px">经手人</div>
<div class="in" style="left:1262px;top:617px;width:85px;height:22px"><div class="b el" style="width:21px;"></div></div>
<div class="lb" style="left:566px;top:662px">承兑银行</div>
<div class="in" style="left:648px;top:661px;width:235px;height:22px"><div class="b dd" style="width:21px;"></div></div>
<div class="lb" style="left:910px;top:661px">协议编号</div>
<div class="in" style="left:998px;top:661px;width:348px;height:22px"></div>
<div class="lb" style="left:566px;top:706px">承兑行行号</div>
<div class="in" style="left:648px;top:705px;width:235px;height:22px"></div>
<div class="lb" style="left:910px;top:706px">承兑行地址</div>
<div class="in" style="left:998px;top:705px;width:348px;height:22px"></div>
<div class="lb" style="left:566px;top:750px">打印模板</div>
<div class="in" style="left:648px;top:748px;width:235px;height:22px"><div class="b el" style="width:21px;"></div></div>
<div class="lb" style="left:910px;top:750px">摘要</div>
<div class="in" style="left:998px;top:748px;width:348px;height:22px"></div>
</div>
<div id="status">
<div class="a" style="left:0;top:997px;width:1920px;height:34px;background:#f0f0f0"></div>
<div class="a" style="left:0;top:997px;width:1920px;height:3px;background:linear-gradient(#fbfbfb,#f0f0f0)"></div>
<div class="a" style="left:0;top:1030px;width:1920px;height:1px;background:#1d2a44"></div>
<svg class="a" style="left:5px;top:1005px" width="20" height="20" viewBox="0 0 20 20"><defs><linearGradient id="sig" x1="0" y1="0" x2="0" y2="1"><stop offset="0" stop-color="#ee5a50"/><stop offset="1" stop-color="#d21f1f"/></linearGradient></defs><rect x="0.500" y="0.500" width="19" height="19" rx="3" fill="url(#sig)" stroke="#c02020" stroke-width="1"/><g fill="#fff" transform="translate(-22.800,-39.600) scale(.475)"><path d="M53.700 95C57.500 95.500 60.500 98 61.500 103L62.500 107C61.500 111 63 115 67 117 64 118.500 60 117 58 114 55 110 54 103 53.700 95z"/><path d="M62.500 107C64 100 70 93 77 89.500L78.500 93C72 97 66.500 103 64.500 110z"/><path d="M83.500 102C84 112 76 122.500 64 122.300 59 122 55.500 119 54 115 58 119.500 65 120.500 71 117 75 114.500 77.500 111.500 78.500 108.500L69.500 112 71.500 109C75 106 79 103.500 83.500 102z"/></g></svg>
<div class="t" style="left:28px;top:1005.500px;font-size:15px;">应用中心<span style="letter-spacing:3.350px">: </span><span style="letter-spacing:.82px;font-size:14px">127.0.0.1:7099</span></div>
<div class="sep" style="left:249px;top:1006px;height:20px;"></div>
<svg class="a" style="left:259.500px;top:1005.500px" width="19" height="19" viewBox="0 0 19 19"><defs><radialGradient id="okg" cx=".4" cy=".3" r=".8"><stop offset="0" stop-color="#7fe05a"/><stop offset="1" stop-color="#128a1a"/></radialGradient></defs><circle cx="9.500" cy="9.500" r="8.700" fill="url(#okg)" stroke="#0f7414" stroke-width=".8"/><path d="M4.800 9.800l3.300 3.300 6.200 -6.600" fill="none" stroke="#fff" stroke-width="2.800" stroke-linecap="round" stroke-linejoin="round"/></svg>
<div class="t" style="left:282px;top:1005.500px;font-size:15px;">连接状态<span style="letter-spacing:3.350px">: </span>正常</div>
<div class="sep" style="left:402px;top:1006px;height:20px;"></div>
<div class="t" style="left:420px;top:1005.500px;font-size:15px;">账套<span style="letter-spacing:3.350px">: </span><span style="font-size:14px;letter-spacing:.43px">susan(2019</span>年第<span style="font-size:14px">3</span>期<span style="font-size:14px">)</span></div>
<div class="sep" style="left:681px;top:1006px;height:20px;"></div>
<div class="t" style="left:700px;top:1005.500px;font-size:15px;">操作员<span style="letter-spacing:3.350px">: </span>系统管理员<span style="font-size:14px;letter-spacing:.9px">(admin)</span><span style="letter-spacing:1.800px"> </span>总部</div>
<div class="sep" style="left:997px;top:1006px;height:20px;"></div>
<div class="a" style="left:1013px;top:1002px;width:217px;height:21px;border-radius:10px;background:linear-gradient(90deg,#dedede 0,#d6d6d6 50%,#e6e6e6 52%,#ebebeb 100%)"></div>
<div class="a" style="left:1020px;top:1005px;width:210px;height:15px;border-radius:0 8px 8px 0;background:linear-gradient(90deg,#c6c6c6 0px,#c6c6c6 15px,#b2b2b2 15px,#b2b2b2 30px,#b6b6b6 30px,#b6b6b6 45px,#aaaaaa 45px,#aaaaaa 60px,#aaaaaa 60px,#aaaaaa 75px,#ababab 75px,#ababab 90px,#b8b8b8 90px,#b8b8b8 105px,#a2a2a2 105px,#a2a2a2 120px,#dedede 120px,#dedede 135px,#c8c8c8 135px,#c8c8c8 150px,#c9c9c9 150px,#c9c9c9 165px,#d4d4d4 165px,#d4d4d4 180px,#c2c2c2 180px,#c2c2c2 195px,#e8e8e8 195px,#e8e8e8 210px)"></div>
<div class="a" style="left:1135px;top:1020px;width:90px;height:3px;border-radius:0 0 6px 0;background:#dde3e8"></div>
<div class="a" style="left:1016px;top:1021px;width:20px;height:2px;background:#3a3a3a;opacity:.85"></div>
<div class="a" style="left:1040px;top:1022px;width:90px;height:1px;background:repeating-linear-gradient(90deg,#666 0,#666 3px,transparent 3px,transparent 9px);opacity:.5"></div>
<div class="sep" style="left:1713px;top:1006px;height:20px;"></div>
<div class="a" style="left:1727px;top:998px;width:193px;height:33px;border:3px solid #b2ceee;border-radius:6px;background:linear-gradient(#ffffff,#f6f6f6 60%,#ececec);box-shadow:inset 0 0 0 1px #d9e6f6"></div>
<div class="a" style="left:1738px;top:1004px;width:21px;height:21px;border:1px solid #3f6da6;background:#cbd8ec;box-shadow:inset 0 0 0 1px #9db4d6,inset 0 0 0 2px #5f84b8"></div>
<div class="t" style="left:1743.500px;top:1004.500px;font-size:15px;font-weight:700;color:#3f6da6;line-height:20px">Q</div>
<div class="t" style="left:1765.500px;top:1004.500px;font-size:15.500px;font-weight:700;color:#3f6da6;line-height:20px">中</div>
<svg class="a" style="left:1790px;top:1005.500px" width="18" height="19" viewBox="0 0 18 19"><path d="M10.500 1C16.500 4.500 17.500 12.500 10 16 6.500 17.600 3 16.800 .8 14 6 15 11.500 9.500 10.500 1z" fill="#3f6da6"/></svg>
<svg class="a" style="left:1816px;top:1008px" width="16" height="14" viewBox="0 0 16 14"><circle cx="3" cy="6.500" r="2" fill="none" stroke="#3f6da6" stroke-width="1.200"/><path d="M10 5h3.200v3.200c0 1.800 -1 3 -2.600 3.600l-.5 -1c.9 -.4 1.400 -1 1.500 -2H10z" fill="#3f6da6"/></svg>
<svg class="a" style="left:1840px;top:1009px" width="20" height="12" viewBox="0 0 20 12"><rect x="0.500" y="0.500" width="19" height="11" rx="2.500" fill="#3f6da6"/><g fill="#eef3fa"><rect x="3" y="3" width="2" height="1.500"/><rect x="6" y="3" width="2" height="1.500"/><rect x="9" y="3" width="2" height="1.500"/><rect x="12" y="3" width="2" height="1.500"/><rect x="15" y="3" width="2" height="1.500"/><rect x="3" y="5.500" width="2" height="1.500"/><rect x="6" y="5.500" width="2" height="1.500"/><rect x="9" y="5.500" width="2" height="1.500"/><rect x="12" y="5.500" width="2" height="1.500"/><rect x="15" y="5.500" width="2" height="1.500"/><rect x="4" y="8" width="12" height="1.500"/></g></svg>
<svg class="a" style="left:1867px;top:1005px" width="15" height="21" viewBox="0 0 15 21"><path d="M6 1.500L6 14 .8 9.500z" fill="#3f6da6"/><path d="M9 17.500L9 5 14.200 9.500z" fill="#3f6da6"/><rect x="5.200" y="16" width="1.600" height="2" fill="#3f6da6"/><rect x="8.200" y="1.500" width="1.600" height="2" fill="#3f6da6"/></svg>
<svg class="a" style="left:1891px;top:1006px" width="17" height="18" viewBox="0 0 17 18"><path d="M12.500 .8C10 .5 7.800 2.500 8 5.200 8 5.800 8.200 6.400 8.400 6.900L.9 14.400C.2 15.100 .2 16.300 .9 17S2.800 17.700 3.500 17L11 9.500C13.800 10.600 16.800 8.400 16.300 4.900L13.600 7.500 11.300 6.600 10.400 4.300 13 1.700C13.200 1.300 13 .9 12.500 .8z" fill="#3f6da6"/></svg>
</div>
</body>
</html>
